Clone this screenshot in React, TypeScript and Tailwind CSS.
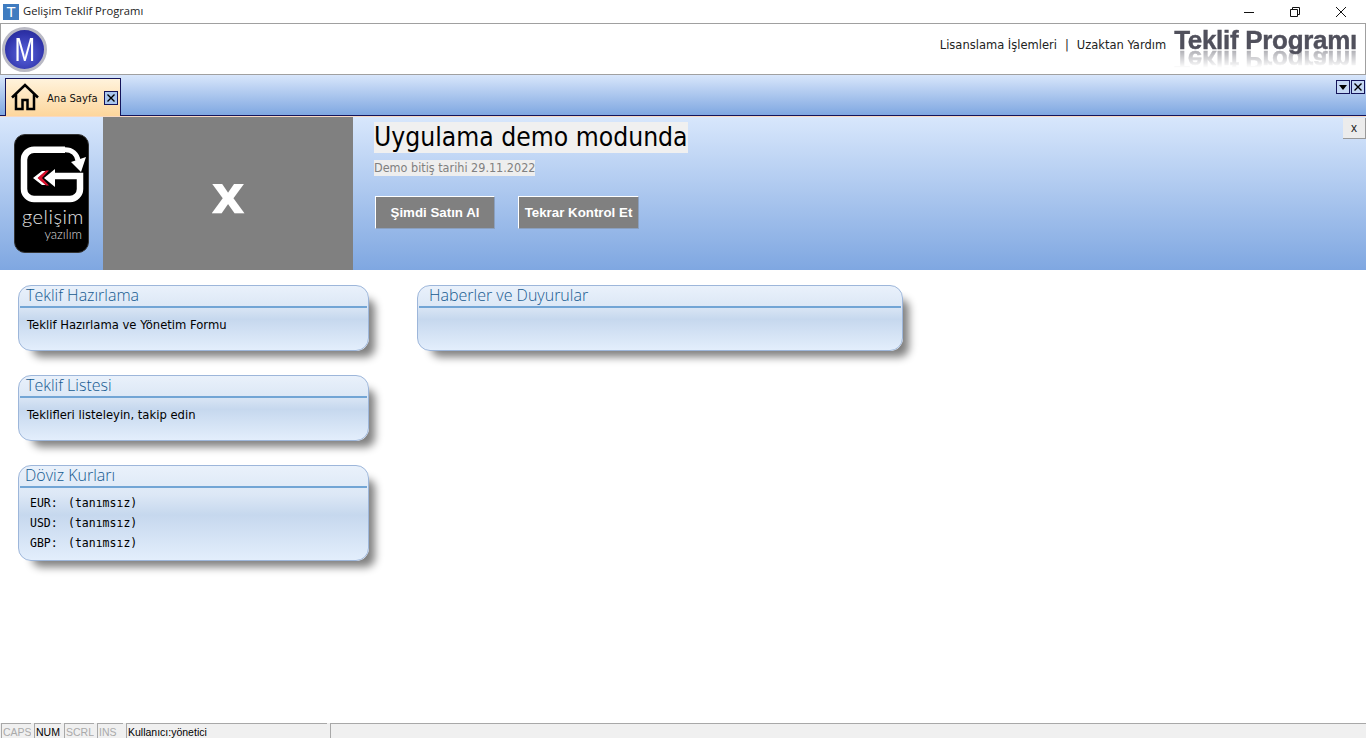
const tabBg = "bg-[linear-gradient(#d8e6fb,#7fa7e1)]";

function TitleBar() {
  return (
    <div className="flex h-[23px] items-center bg-white pl-[3px]">
      <div className="flex h-4 w-4 items-center justify-center bg-[#3f7cc0] font-['Liberation_Sans',sans-serif] text-[15px] leading-none text-white">
        T
      </div>
      <span className="ml-1 font-['Open_Sans',sans-serif] text-[11.2px] text-[#222]">Gelişim Teklif Programı</span>
      <div className="ml-auto flex h-full pr-[2px]">
        <button className="flex w-[46px] items-center justify-center">
          <svg width="10" height="10" viewBox="0 0 10 10"><path d="M0 5.5h10" stroke="#111" /></svg>
        </button>
        <button className="flex w-[46px] items-center justify-center">
          <svg width="10" height="10" viewBox="0 0 10 10" fill="none" stroke="#111">
            <path d="M.5 2.5h7v7h-7zM2.5 2.5v-2h7v7h-2" />
          </svg>
        </button>
        <button className="flex w-[46px] items-center justify-center">
          <svg width="10" height="10" viewBox="0 0 10 10"><path d="M0 0l10 10M10 0L0 10" stroke="#111" /></svg>
        </button>
      </div>
    </div>
  );
}

function MLogo() {
  return (
    <div className="flex h-[45px] w-[45px] items-center justify-center rounded-full border-[3px] border-[#b9b9c4] bg-[radial-gradient(circle_at_50%_62%,#5a64dc,#2f33aa_65%,#22258a_100%)] font-['Liberation_Sans',sans-serif] text-[33px] leading-none text-white">
      <span className="scale-x-75">M</span>
    </div>
  );
}

function Header() {
  return (
    <div className="flex h-[52px] items-center border border-[#a0a0a0] bg-white pl-px pr-[8px]">
      <MLogo />
      <div className="mb-[7px] ml-auto flex items-center font-['DejaVu_Sans',sans-serif] text-[11.5px] text-[#222]">
        <span>Lisanslama İşlemleri</span>
        <span className="mx-2">|</span>
        <span>Uzaktan Yardım</span>
      </div>
      <div className="mb-[19px] ml-2 h-[26px] font-['Liberation_Sans',sans-serif] text-[26px] font-bold leading-[26px] tracking-[-0.3px] text-[#50505c] [-webkit-box-reflect:below_-6px_linear-gradient(transparent_20%,rgba(0,0,0,.55))] [-webkit-text-stroke:0.4px_#50505c]">
        Teklif Programı
      </div>
    </div>
  );
}

function TabStrip() {
  return (
    <div className={`flex h-[41px] items-end justify-between border-b border-[#14145a] pl-[5px] ${tabBg}`}>
      <div className="-mb-px flex h-[38px] w-[116px] items-center border border-b-0 border-[#14145a] bg-[linear-gradient(#fff3dc,#fdd69c)] pl-[5px]">
        <svg className="mb-[2px]" width="28" height="28" viewBox="0 0 28 28" fill="none" stroke="#000" strokeWidth="2.5">
          <path d="M1 14.5L14 2l13 12.5M5 11v15h6.500v-9h5v9H23V11" />
        </svg>
        <span className="ml-2 pt-[2px] font-['DejaVu_Sans',sans-serif] text-[10px] text-[#111]">Ana Sayfa</span>
        <span className="ml-auto mr-[2px] flex h-[14px] w-[14px] items-center justify-center border border-[#14145a] bg-[#a9c6ef]">
          <svg width="8" height="8" viewBox="0 0 8 8"><path d="M.5.5l7 7M7.5.5l-7 7" stroke="#000" strokeWidth="1.4" /></svg>
        </span>
      </div>
      <div className="mb-[21px] mr-px flex gap-px">
        <span className="flex h-[14px] w-[14px] items-center justify-center border border-[#14145a] bg-[#c5d8f4]">
          <svg width="8" height="5" viewBox="0 0 8 5"><path d="M0 0h8L4 5z" fill="#000" /></svg>
        </span>
        <span className="flex h-[14px] w-[14px] items-center justify-center border border-[#14145a] bg-[#c5d8f4]">
          <svg width="8" height="8" viewBox="0 0 8 8"><path d="M.5.5l7 7M7.5.5l-7 7" stroke="#000" strokeWidth="1.4" /></svg>
        </span>
      </div>
    </div>
  );
}

function GelisimLogo() {
  return (
    <div className="relative ml-[14px] mt-[17px] h-[119px] w-[75px] rounded-[11px] border border-[#333] bg-black">
      <svg className="absolute -left-px -top-px" width="75" height="75" viewBox="0 0 75 75" fill="none">
        <path d="M51 15.700H20a10 10 0 0 0-10 10V55a10 10 0 0 0 10 10h36a10 10 0 0 0 10-10V42H40" stroke="#fff" strokeWidth="6.500" />
        <path d="M51 15.700c7 0 12 4 13 11" stroke="#fff" strokeWidth="5" />
        <path d="M57 28l15-5-5 15z" fill="#fff" />
        <path d="M19 44l9-7h4l-8 7 8 7h-4z" fill="#fff" />
        <path d="M30 44l11-9v18z" fill="#fff" />
        <path d="M23.500 44l8.500-7.500h3L28 44l7 7.500h-3z" fill="#d8102c" />
      </svg>
      <div className="absolute left-[7px] top-[71px] font-['Lato',sans-serif] text-[20px] font-light leading-5 tracking-wide text-[#e4e4e4]">gelişim</div>
      <div className="absolute right-[6px] top-[91px] font-['Lato',sans-serif] text-[13px] font-light leading-4 text-[#ddd]">yazılım</div>
    </div>
  );
}

function DemoButton({ label, width }: { label: string; width: string }) {
  return (
    <button className={`flex h-[33px] ${width} items-center justify-center border border-t-white border-l-white border-b-[#8aa0c0] border-r-[#8aa0c0] bg-[#808080] font-['Liberation_Sans',sans-serif] text-[13.3px] font-bold text-white`}>
      {label}
    </button>
  );
}

function Banner() {
  return (
    <div className="flex h-[154px] border-t border-[#f8d8c0] bg-[linear-gradient(#d8e7fc,#7fa7e1)]">
      <div className="w-[103px]">
        <GelisimLogo />
      </div>
      <div className="flex w-[250px] items-center justify-center bg-[#808080] pt-[2px] font-['DejaVu_Sans',sans-serif] text-[53px] font-bold leading-none text-white">
        x
      </div>
      <div className="flex flex-col items-start pl-[21px] pt-[5px]">
        <h1 className="bg-[#f0f0f0] font-['DejaVu_Sans_Condensed','DejaVu_Sans',sans-serif] text-[26.250px] leading-[31px] text-black">
          Uygulama demo modunda
        </h1>
        <p className="mt-[7px] bg-[#eeeeee] font-['DejaVu_Sans_Condensed','DejaVu_Sans',sans-serif] text-[12.500px] leading-4 text-[#808080]">Demo bitiş tarihi 29.11.2022</p>
        <div className="ml-px mt-5 flex gap-[23px]">
          <DemoButton label="Şimdi Satın Al" width="w-[120px]" />
          <DemoButton label="Tekrar Kontrol Et" width="w-[121px]" />
        </div>
      </div>
      <button className="ml-auto mt-px h-[21px] w-[23px] border-r border-b border-[#999] bg-[#ececec] font-['Liberation_Sans',sans-serif] text-xs text-[#222]">
        x
      </button>
    </div>
  );
}

function Card({ title, inset, height, children }: { title: string; inset: string; height: string; children?: React.ReactNode }) {
  return (
    <div
      className={`${height} rounded-[13px] border border-[#9db6da] bg-[linear-gradient(#e9f1fb,#dde8f6_30%,#c6d8ee_52%,#e3eefc_100%)] px-px shadow-[10px_10px_9px_-4px_#808080]`}
    >
      <div className={`h-[22px] border-b-2 border-[#72a5d5] font-['Open_Sans',sans-serif] text-base font-light leading-[19px] text-[#155a90] ${inset}`}>
        {title}
      </div>
      {children}
    </div>
  );
}

function Rate({ code }: { code: string }) {
  return (
    <div className="flex">
      <span className="w-[38px]">{code}:</span>
      <span>(tanımsız)</span>
    </div>
  );
}

function MainContent() {
  return (
    <div className="flex flex-1 items-start gap-12 pl-[18px] pt-[15px]">
      <div className="flex w-[351px] flex-col gap-6">
        <Card title="Teklif Hazırlama" inset="pl-[6px]" height="h-[66px]">
          <p className="pl-[7px] pt-[9px] font-['DejaVu_Sans',sans-serif] text-[11.6px] text-black">Teklif Hazırlama ve Yönetim Formu</p>
        </Card>
        <Card title="Teklif Listesi" inset="pl-[6px]" height="h-[66px]">
          <p className="pl-[7px] pt-[9px] font-['DejaVu_Sans',sans-serif] text-[11.6px] text-black">Teklifleri listeleyin, takip edin</p>
        </Card>
        <Card title="Döviz Kurları" inset="pl-[5px]" height="h-[96px]">
          <div className="pl-[10px] pt-[5px] font-['DejaVu_Sans_Mono',monospace] text-[11.5px] leading-5 text-black">
            <Rate code="EUR" />
            <Rate code="USD" />
            <Rate code="GBP" />
          </div>
        </Card>
      </div>
      <div className="w-[486px]">
        <Card title="Haberler ve Duyurular" inset="pl-[10px]" height="h-[66px]" />
      </div>
    </div>
  );
}

function StatusCell({ label, active, width }: { label: string; active?: boolean; width: string }) {
  return (
    <div className={`${width} h-[15px] overflow-hidden border-l border-t border-[#a8a8a8] pl-px text-[10.5px] leading-[17px] ${active ? "text-black" : "text-[#aaa]"}`}>
      {label}
    </div>
  );
}

function StatusBar() {
  return (
    <div className="flex h-[15px] gap-[3px] bg-[#f0f0f0] pl-px font-['Liberation_Sans',sans-serif]">
      <StatusCell label="CAPS" width="w-[30px]" />
      <StatusCell label="NUM" active width="w-[27px]" />
      <StatusCell label="SCRL" width="w-[30px]" />
      <StatusCell label="INS" width="w-[26px]" />
      <StatusCell label="Kullanıcı:yönetici" active width="w-[201px]" />
      <StatusCell label="" width="flex-1" />
    </div>
  );
}

export default function App() {
  return (
    <div className="flex h-[738px] flex-col overflow-hidden bg-white">
      <TitleBar />
      <Header />
      <TabStrip />
      <Banner />
      <MainContent />
      <StatusBar />
    </div>
  );
}
